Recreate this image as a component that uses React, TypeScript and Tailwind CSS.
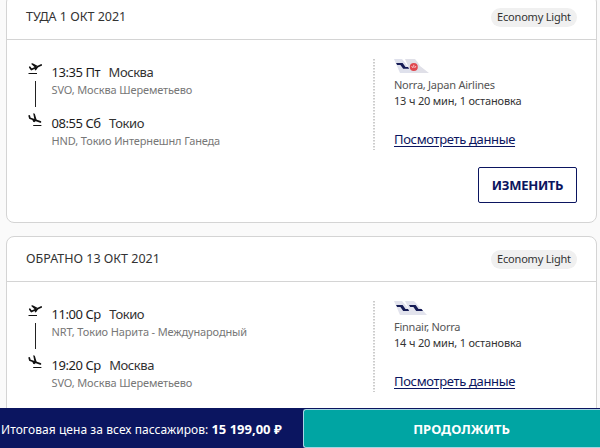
import type { ReactNode } from 'react'

type Stop = {
  time: string
  city: string
  airport: string
}

type Flight = {
  title: string
  from: Stop
  to: Stop
  carriers: string
  duration: string
  tail: ReactNode
  canChange?: boolean
}

function TakeoffIcon() {
  return (
    <svg className="block h-4 w-4" viewBox="0 0 16 16" fill="none">
      <path d="M1.8 6.2 L3.4 8.6 L13.2 4" stroke="#111" strokeWidth="1.7" strokeLinejoin="round" strokeLinecap="round" />
      <path d="M3 2.8 L4.6 2.3 L9.4 4.7 L7 6.5 Z M6.6 7.4 L10.6 5.4 L8.2 9 L7 9.4 Z" fill="#111" />
      <path d="M0.5 12.5 H9" stroke="#111" strokeWidth="1" />
    </svg>
  )
}

function LandingIcon() {
  return (
    <svg className="block h-4 w-4" viewBox="0 0 16 16" fill="none">
      <path d="M1.2 2.8 L1.9 5.3 L12.4 8.9" stroke="#111" strokeWidth="1.7" strokeLinejoin="round" strokeLinecap="round" />
      <path d="M5.2 0.3 L6.8 0.8 L8.8 7.6 L6.4 6.6 Z M4 6 L8.6 7.6 L6.2 9.2 L5.2 8.8 Z" fill="#111" />
      <path d="M5.2 12.5 H13.4" stroke="#111" strokeWidth="1" />
    </svg>
  )
}

function JapanTails() {
  return (
    <svg className="block h-[14px] w-9" viewBox="0 0 36 14">
      <path d="M0 0 H8 L19 14 H6 Z" fill="#dfe1ec" />
      <path d="M11 0 H21 Q24 3 26 7 L35 14 H17 Z" fill="#e0e0e8" />
      <path d="M2 4 H8.6 L11.5 8 H14 L15.2 9.8 H9.2 L6.4 6 H3.2 Z" fill="#151b55" />
      <circle cx="19.8" cy="8" r="4" fill="#e0474f" />
      <path d="M17.6 7 L19.1 9 M19.8 5.8 V8.4 M22 7 L20.6 9" stroke="#fff" strokeWidth="0.7" />
    </svg>
  )
}

function FinnairTails() {
  return (
    <svg className="block h-[14px] w-9" viewBox="0 0 36 14">
      <path d="M0 0 H8 L20 14 H6 Z" fill="#e2e3ed" />
      <path d="M11 0 H20 L33 14 H18 Z" fill="#e2e3ed" />
      <path d="M2 4 H8.6 L11.5 8 H14 L15.2 10 H9.2 L6.4 6 H3.2 Z" fill="#151b55" />
      <path d="M15 4 H21.6 L24.5 8 H27.6 L29 10 H22.2 L19.4 6 H16.2 Z" fill="#151b55" />
    </svg>
  )
}

const flights: Flight[] = [
  {
    title: 'ТУДА 1 ОКТ 2021',
    from: { time: '13:35 Пт', city: 'Москва', airport: 'SVO, Москва Шереметьево' },
    to: { time: '08:55 Сб', city: 'Токио', airport: 'HND, Токио Интернешнл Ганеда' },
    carriers: 'Norra, Japan Airlines',
    duration: '13 ч 20 мин, 1 остановка',
    tail: <JapanTails />,
    canChange: true,
  },
  {
    title: 'ОБРАТНО 13 ОКТ 2021',
    from: { time: '11:00 Ср', city: 'Токио', airport: 'NRT, Токио Нарита - Международный' },
    to: { time: '19:20 Ср', city: 'Москва', airport: 'SVO, Москва Шереметьево' },
    carriers: 'Finnair, Norra',
    duration: '14 ч 20 мин, 1 остановка',
    tail: <FinnairTails />,
  },
]

function StopInfo({ stop }: { stop: Stop }) {
  return (
    <div className="h-[51px] whitespace-nowrap">
      <div className="flex h-[19px] items-center gap-[8.5px] text-[13px] leading-[19px] tracking-[-0.45px] text-[#333]">
        <span className="text-[#1c1c1c]">{stop.time}</span>
        <span>{stop.city}</span>
      </div>
      <div className="text-[11px] leading-4 tracking-[-0.14px] text-[#777]">{stop.airport}</div>
    </div>
  )
}

function FlightCard({ flight }: { flight: Flight }) {
  return (
    <section className="h-[229px] w-[591px] flex-none rounded-lg border border-[#d4d4d4] bg-white">
      <header className="flex h-[45px] items-center justify-between border-b border-[#d4d4d4] px-[19px]">
        <h2 className="pt-px text-[12.5px] whitespace-nowrap text-[#333]">{flight.title}</h2>
        <span className="flex h-[19px] w-[86px] items-center justify-center rounded-full bg-[#f0f0f0] text-[11px] tracking-[-0.2px] whitespace-nowrap text-[#333]">
          Economy Light
        </span>
      </header>

      <div className="flex h-[110px] pt-[19px] pl-[21px]">
        <div className="flex w-[23.5px] flex-none flex-col pt-[2px]">
          <TakeoffIcon />
          <div className="mt-[4px] mb-[6px] ml-[7px] h-[26px] w-px bg-[#222]" />
          <LandingIcon />
        </div>
        <div className="w-[321.5px] flex-none pt-1">
          <StopInfo stop={flight.from} />
          <StopInfo stop={flight.to} />
        </div>
        <svg className="h-[91px] w-[2px] flex-none" viewBox="0 0 2 91">
          <path d="M1 0 V91" stroke="#ccc" strokeWidth="2" strokeDasharray="1.5 1.5" />
        </svg>
        <div className="pl-[19px] whitespace-nowrap">
          {flight.tail}
          <div className="mt-1 text-[11px] leading-4 tracking-[-0.25px] text-[#555]">{flight.carriers}</div>
          <div className="text-[11px] leading-4 tracking-[-0.18px] text-[#333]">{flight.duration}</div>
          <a
            href="#"
            className="mt-5 block text-[13px] leading-5 tracking-[-0.34px] text-[#0b1560] underline underline-offset-2"
          >
            Посмотреть данные
          </a>
        </div>
      </div>

      {flight.canChange && (
        <div className="flex justify-end pt-[17px] pr-[19px]">
          <button className="h-9 w-[99px] rounded-[2px] border border-[#0b1560] pt-px text-[13px] font-bold tracking-[-0.3px] text-[#0b1560]">
            ИЗМЕНИТЬ
          </button>
        </div>
      )}
    </section>
  )
}

export default function App() {
  return (
    <div className="flex h-[448px] w-[600px] flex-col overflow-hidden bg-[#fafafa] font-['Noto_Sans',sans-serif]">
      <main className="flex h-[408px] flex-none flex-col overflow-hidden pl-[6px]">
        <div className="-mt-1.5 flex flex-col gap-[13px]">
          {flights.map((flight) => (
            <FlightCard key={flight.title} flight={flight} />
          ))}
        </div>
      </main>

      <footer className="flex h-10 flex-none bg-[#0b1560] text-white">
        <div className="flex w-[303px] flex-none items-center gap-[3px] pt-[3px] pl-px whitespace-nowrap">
          <span className="text-[12px] tracking-[0.06px]">Итоговая цена за всех пассажиров:</span>
          <b className="text-[13px]">15 199,00 ₽</b>
        </div>
        <button className="mt-px h-[39px] flex-1 rounded-l-[3px] border border-r-0 border-[#a5d5e2] bg-[#00a5a3] pt-[2px] pl-[19px] text-[13px] font-bold">
          ПРОДОЛЖИТЬ
        </button>
      </footer>
    </div>
  )
}
